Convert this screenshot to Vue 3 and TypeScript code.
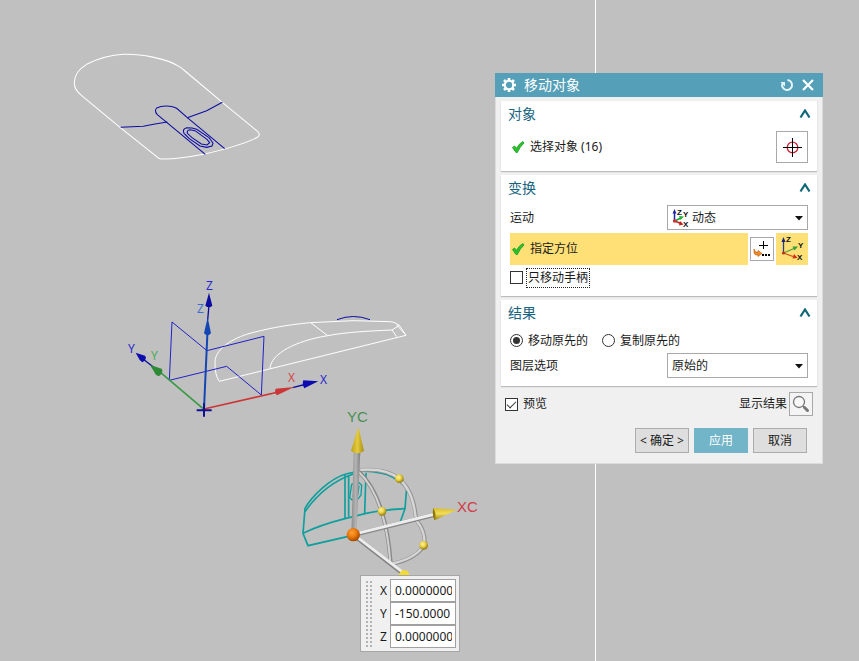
<script setup lang="ts">
import { reactive, ref } from 'vue'

interface Coordinate {
  axis: string
  value: string
}

const coordinates = reactive<Coordinate[]>([
  { axis: 'X', value: '0.000000000' },
  { axis: 'Y', value: '-150.0000' },
  { axis: 'Z', value: '0.000000000' },
])

const motion = ref('dynamic')
const layer = ref('original')
const handlesOnly = ref(false)
const resultMode = ref('move')
const preview = ref(true)
</script>

<template>
  <main class="viewport">
    <svg class="scene" width="859" height="661" aria-hidden="true">
      <defs>
        <linearGradient id="rod" x1="0" x2="1" y1="0" y2="0">
          <stop offset="0" stop-color="#8b8b8b" />
          <stop offset="0.5" stop-color="#b4b4b4" />
          <stop offset="1" stop-color="#808080" />
        </linearGradient>
        <linearGradient id="coneUp" x1="0" x2="1" y1="0" y2="0">
          <stop offset="0" stop-color="#bba11a" />
          <stop offset="0.5" stop-color="#e4ca3c" />
          <stop offset="1" stop-color="#a88e10" />
        </linearGradient>
        <linearGradient id="coneSide" x1="0" x2="0" y1="0" y2="1">
          <stop offset="0" stop-color="#d8bd2c" />
          <stop offset="0.45" stop-color="#f2dc58" />
          <stop offset="1" stop-color="#9a8210" />
        </linearGradient>
        <radialGradient id="ballOrange" cx="0.4" cy="0.35" r="0.65">
          <stop offset="0" stop-color="#ffa23c" />
          <stop offset="0.5" stop-color="#ee7a0a" />
          <stop offset="1" stop-color="#a04a00" />
        </radialGradient>
        <radialGradient id="ballYellow" cx="0.4" cy="0.35" r="0.65">
          <stop offset="0" stop-color="#fff3a0" />
          <stop offset="0.5" stop-color="#ecd040" />
          <stop offset="1" stop-color="#8f7a10" />
        </radialGradient>
      </defs>

      <!-- Cover part, tilted view -->
      <g transform="translate(60 40) scale(0.33333)" fill="none" stroke-width="3.2">
        <path
          stroke="#fff"
          d="M43 130 C42 105 60 85 80 73 C110 58 150 45 190 43 C240 41 320 55 358 80 Q368 86 375 93 L487 187 L590 272 Q605 284 592 292 C560 309 500 327 430 343 C390 351 340 358 305 357 Q298 358 290 350 L180 262 L65 167 Q43 150 43 130 Z"
        />
        <g stroke="#0c0ca4">
          <path d="M182 262 L250 259 L285 252 L322 246" />
          <path d="M382 233 L440 212 L487 187" />
          <path d="M436 343 L292 224 Q282 213 290 204 Q308 195 338 200 L350 205 L382 233 L494 326" />
          <path d="M372 280 Q366 267 380 263 L396 264 L410 268 L447 293 L459 309 L456 318 L440 322 L420 318 L388 296 Z" />
          <path d="M382 280 Q380 270 390 269 L405 272 L441 298 L449 308 L441 315 L424 312 L395 292 Z" />
        </g>
      </g>

      <!-- Cover part, side view -->
      <g transform="translate(260 300) scale(0.33333)" fill="none" stroke="#fff" stroke-width="3">
        <path d="M-122 244 L438 106 L418 76 L402 67 L390 65 L280 62 L152 68 C80 74 10 88 -40 103 C-90 119 -134 150 -135 185 Q-136 226 -122 244" />
        <path d="M30 206 C32 160 110 122 203 107 C260 96 330 93 396 90 L410 110" />
        <path d="M152 68 L203 107 M396 90 L418 76 M410 75 L436 103" />
        <path stroke="#0c0ca4" d="M231 59 Q280 40 330 59" />
      </g>

      <!-- Datum planes and axes -->
      <g transform="translate(120 270) scale(0.33333)" fill="none" stroke="#2020c8" stroke-width="3">
        <path d="M148 331 L156 156 L261 242 L432 199 L424 375 L320 289 Z" />
        <path stroke="#0c0c9c" stroke-width="4" d="M263 150 L267 105 M70 268 L105 295 M518 353 L560 342" />
        <path stroke="#3a9a44" stroke-width="5" d="M252 418 L115 302" />
        <path stroke="#cc3636" stroke-width="5" d="M252 417 L475 366" />
        <path stroke="#1446b4" stroke-width="6" d="M252 417 L262 195" />
        <path stroke="#101090" stroke-width="6" d="M230 421 H275 M252 400 V440" />
        <g stroke="none">
          <path fill="#0c0ca0" d="M267 68 L277 107 Q267 116 256 107 Z" />
          <path fill="#1446b4" d="M263 142 L273 190 Q263 203 252 190 Z" />
          <path fill="#0c0cb0" d="M47 248 L75 257 Q83 266 67 277 L59 270 Z" />
          <path fill="#2e8a36" d="M90 285 L125 296 Q132 306 117 319 L108 315 Z" />
          <path fill="#cc3636" d="M523 351 L471 376 Q462 368 467 356 Z" />
          <path fill="#0c0cb0" d="M595 334 L553 355 Q545 344 550 331 Z" />
        </g>
      </g>
      <g class="axis-label">
        <text x="206" y="290" fill="#2828cc">Z</text>
        <text x="197" y="313" fill="#3c6cd0">Z</text>
        <text x="128" y="353" fill="#2828cc">Y</text>
        <text x="151" y="360" fill="#4caa54">Y</text>
        <text x="288" y="382" fill="#d44848">X</text>
        <text x="320" y="384" fill="#2828cc">X</text>
      </g>

      <!-- Moved copy with the drag handles -->
      <g transform="translate(290 400) scale(0.33333)" fill="none" stroke="#0f9f9c" stroke-width="5">
        <path d="M188 406 L54 437 L39 400 L45 325 C65 290 120 235 168 222 Q220 206 270 219 Q310 224 350 264 L345 326 L330 368" />
        <path d="M39 400 Q90 375 165 356 L228 340 Q280 329 345 326" />
        <path d="M45 335 C80 285 125 244 190 222" />
        <path d="M165 222 V356 M176 226 V350 M228 218 L224 340" />
        <path stroke-width="4" d="M185 253 L179 292 L186 300 L205 296 L213 285 L215 256 L206 247 Z M194 257 L190 288 L203 284 L207 259 Z" />
      </g>
      <g transform="translate(290 400) scale(0.33333)" fill="none" stroke-linecap="round">
        <path stroke="#929292" stroke-width="12" d="M204 211 Q290 203 328 238 Q368 270 377 345 Q379 365 390 375 Q408 405 403 437 Q375 478 305 492" />
        <path stroke="#d6d6d6" stroke-width="7" d="M203 210 Q289 202 327 237 Q367 269 376 345 Q378 365 389 375 Q407 405 402 436 Q374 477 304 491" />
        <path stroke="#888" stroke-width="12" d="M205 214 Q250 255 275 334 Q296 400 302 490" />
        <path stroke="#d2d2d2" stroke-width="6" d="M204 214 Q249 255 274 334 Q295 400 301 490" />
        <path stroke="#858585" stroke-width="13" d="M190 405 L335 518 M190 405 L435 344" />
        <path stroke="#ededed" stroke-width="9" d="M191 403 L336 515 M190 403 L435 342" />
        <path fill="url(#rod)" d="M184 404 L191 155 H211 L199 404 Z" />
        <path fill="url(#coneUp)" d="M205 80 L222 153 Q203 166 183 153 Z" />
        <path fill="url(#coneSide)" d="M501 329 L434 361 Q425 344 430 324 Z" />
        <path fill="#8c7611" d="M434 361 Q425 344 430 324 Q441 343 434 361" />
        <path fill="#f2dc32" d="M326 523 L337 510 L352 512 L364 534 L330 536 Z" />
        <circle cx="190" cy="404" r="20" fill="url(#ballOrange)" />
        <circle cx="328" cy="236" r="13" fill="url(#ballYellow)" />
        <circle cx="276" cy="334" r="13" fill="url(#ballYellow)" />
        <circle cx="401" cy="436" r="13" fill="url(#ballYellow)" />
      </g>
      <g class="handle-label">
        <text x="347" y="422" fill="#4a9050">YC</text>
        <text x="457" y="512" fill="#d03c48">XC</text>
      </g>
    </svg>
    <div class="divider"></div>

    <form class="coords" @submit.prevent>
      <span class="grip"></span>
      <div class="coord-rows">
        <label v-for="item in coordinates" :key="item.axis" class="coord">
          <span>{{ item.axis }}</span>
          <input v-model="item.value" type="text" />
        </label>
      </div>
    </form>

    <section class="dialog" role="dialog" aria-labelledby="dialog-title">
      <header class="titlebar">
        <svg width="16" height="16" viewBox="0 0 16 16" fill="none" stroke="#fff">
          <circle cx="8" cy="8" r="4.3" stroke-width="2.2" />
          <path stroke-width="2.6" d="M8 1V3.2M8 12.8V15M1 8H3.2M12.8 8H15M3 3L4.6 4.6M11.4 11.4L13 13M3 13L4.6 11.4M11.4 4.6L13 3" />
        </svg>
        <h1 id="dialog-title">移动对象</h1>
        <button type="button" class="plain" aria-label="重置">
          <svg width="14" height="14" viewBox="0 0 14 14" fill="none" stroke="#e4f6fc">
            <path stroke-width="2" d="M7.5 2A5 5 0 1 1 2.3 5.5" />
            <path fill="#e4f6fc" stroke="none" d="M0.5 4H5V8.5Z" />
          </svg>
        </button>
        <button type="button" class="plain" aria-label="关闭">
          <svg width="14" height="14" viewBox="0 0 14 14" fill="none" stroke="#fff" stroke-width="2.2">
            <path d="M2 2L12 12M12 2L2 12" />
          </svg>
        </button>
      </header>

      <div class="body">
        <section class="group">
          <header class="group-head">
            <h2>对象</h2>
            <button type="button" class="plain" aria-label="折叠">
              <svg width="12" height="10" viewBox="0 0 12 10" fill="none" stroke="#0c6674" stroke-width="2.2"><path d="M1.5 8.5L6 1.5L10.5 8.5" /></svg>
            </button>
          </header>
          <div class="row select-row">
            <svg class="check" width="14" height="14" viewBox="0 0 14 14"><path fill="#2cc22c" stroke="#159a1c" stroke-width="0.8" d="M1.5 7.5L3.5 6L5.5 8.3Q8 3.5 12 1.5L13 3Q9 6.5 6.3 12.5H5Z" /></svg>
            <span class="grow">选择对象 (16)</span>
            <button type="button" class="pick" aria-label="点构造">
              <svg width="20" height="20" viewBox="0 0 20 20" fill="none">
                <circle cx="10.5" cy="10.5" r="5.3" stroke="#d02030" stroke-width="1.3" />
                <path stroke="#000" stroke-width="1" d="M10.5 1V20M1 10.5H20" />
              </svg>
            </button>
          </div>
        </section>

        <section class="group">
          <header class="group-head">
            <h2>变换</h2>
            <button type="button" class="plain" aria-label="折叠">
              <svg width="12" height="10" viewBox="0 0 12 10" fill="none" stroke="#0c6674" stroke-width="2.2"><path d="M1.5 8.5L6 1.5L10.5 8.5" /></svg>
            </button>
          </header>
          <div class="row motion-row">
            <label for="motion" class="grow">运动</label>
            <div class="combo with-icon">
              <svg class="combo-icon" width="18" height="18" viewBox="0 0 18 18" fill="none">
                <path stroke="#2020a8" stroke-width="1.5" d="M3.5 12V3" />
                <path fill="#2020a8" d="M3.5 0L5.5 4.5H1.5Z" />
                <path stroke="#20a038" stroke-width="1.5" d="M3.5 12L10 9" />
                <path fill="#20b038" d="M13 7.5L9.5 11L8 7Z" />
                <path stroke="#c02020" stroke-width="1.5" d="M3.5 12L10 14.5" />
                <path fill="#c02020" d="M12.5 15.5L8 16.5L9 12Z" />
                <circle cx="3.5" cy="12" r="1.7" fill="#d03030" />
                <g class="mini-label"><text x="6" y="6">Z</text><text x="12" y="8">Y</text><text x="12" y="18">X</text></g>
              </svg>
              <select id="motion" v-model="motion"><option value="dynamic">动态</option></select>
              <svg class="arrow" width="8" height="5" viewBox="0 0 8 5"><path fill="#111" d="M0 0H8L4 4.5Z" /></svg>
            </div>
          </div>
          <div class="row orient-row">
            <div class="active grow">
              <svg class="check" width="14" height="14" viewBox="0 0 14 14"><path fill="#2cc22c" stroke="#159a1c" stroke-width="0.8" d="M1.5 7.5L3.5 6L5.5 8.3Q8 3.5 12 1.5L13 3Q9 6.5 6.3 12.5H5Z" /></svg>
              <span>指定方位</span>
            </div>
            <button type="button" class="small-tool" aria-label="点对话框">
              <svg width="18" height="18" viewBox="0 0 18 18" fill="none">
                <path stroke="#000" stroke-width="1" d="M10.5 1V9M6 5.5H15" />
                <path fill="#f08a28" stroke="#b85c10" stroke-width="0.6" d="M1 9L2.5 12H5V10.5L9 13.5L5 16.5V15H2.5L1 13Z" />
                <path fill="#000" d="M9 14H11V16H9ZM12 14H14V16H12ZM15 14H17V16H15Z" />
              </svg>
            </button>
            <button type="button" class="csys" aria-label="操控器">
              <svg width="24" height="26" viewBox="0 0 24 26" fill="none">
                <path stroke="#2c3c80" stroke-width="1.3" d="M3.5 17V4" />
                <path fill="#18207c" d="M3.5 1L5.5 6H1.5Z" />
                <path stroke="#48a040" stroke-width="1.3" d="M3.5 17L14 12.5" />
                <path fill="#30a038" d="M18 10.5L14.5 14.5L12.5 10.5Z" />
                <path stroke="#d05020" stroke-width="1.3" d="M3.5 17L13 20.5" />
                <path fill="#d02c18" d="M17.5 22L12.5 22.5L14 18Z" />
                <circle cx="3.5" cy="17" r="1.6" fill="#c83018" />
                <g class="small-label"><text x="6" y="6">Z</text><text x="18" y="12">Y</text><text x="17" y="24">X</text></g>
              </svg>
            </button>
          </div>
          <label class="row tick-row">
            <input v-model="handlesOnly" type="checkbox" />
            <span class="focused">只移动手柄</span>
          </label>
        </section>

        <section class="group">
          <header class="group-head">
            <h2>结果</h2>
            <button type="button" class="plain" aria-label="折叠">
              <svg width="12" height="10" viewBox="0 0 12 10" fill="none" stroke="#0c6674" stroke-width="2.2"><path d="M1.5 8.5L6 1.5L10.5 8.5" /></svg>
            </button>
          </header>
          <div class="row radio-row">
            <label><input v-model="resultMode" type="radio" name="result" value="move" />移动原先的</label>
            <label><input v-model="resultMode" type="radio" name="result" value="copy" />复制原先的</label>
          </div>
          <div class="row">
            <label for="layer" class="grow">图层选项</label>
            <div class="combo">
              <select id="layer" v-model="layer"><option value="original">原始的</option></select>
              <svg class="arrow" width="8" height="5" viewBox="0 0 8 5"><path fill="#111" d="M0 0H8L4 4.5Z" /></svg>
            </div>
          </div>
        </section>

        <div class="preview-row">
          <label class="grow"><input v-model="preview" type="checkbox" />预览</label>
          <span>显示结果</span>
          <button type="button" class="lens" aria-label="显示结果">
            <svg width="18" height="18" viewBox="0 0 18 18" fill="none">
              <circle cx="7" cy="7" r="5.5" fill="#f8f8f8" stroke="#777" stroke-width="1.3" />
              <path stroke="#777" stroke-width="3" stroke-linecap="round" d="M12.5 12.5L15.5 15.5" />
              <path stroke="#777" stroke-width="1.2" d="M11 11L12.5 12.5" />
            </svg>
          </button>
        </div>

        <footer class="actions">
          <button type="button">&lt; 确定 &gt;</button>
          <button type="button" class="primary">应用</button>
          <button type="button">取消</button>
        </footer>
      </div>
    </section>
  </main>
</template>

<style>
body {
  background: #c0c0c0;
}
</style>

<style scoped>
.viewport {
  position: relative;
  min-height: 100vh;
  overflow: hidden;
  background: #c0c0c0;
  color: #1a1a1a;
  font: 12px/16px "Noto Sans", "Noto Sans CJK SC", sans-serif;
}

.viewport *,
.viewport *::before {
  box-sizing: border-box;
}

.scene {
  position: absolute;
  top: 0;
  left: 0;
}

.axis-label {
  font-size: 12px;
}

.handle-label {
  font: 15px "Liberation Sans", sans-serif;
}

.mini-label,
.small-label {
  font: bold 8px "Liberation Sans", sans-serif;
  fill: #111;
}

.divider {
  position: absolute;
  top: 0;
  bottom: 0;
  left: 595px;
  width: 1px;
  background: #fff;
}

svg {
  display: block;
  flex: none;
}

button,
input,
select {
  margin: 0;
  font: inherit;
  color: inherit;
}

button {
  display: flex;
  align-items: center;
  justify-content: center;
  padding: 0;
  border: 1px solid #a8a8a8;
  border-radius: 0;
  background: #fff;
}

.plain {
  border: 0;
  background: none;
}

.grow {
  flex: 1;
}

.coords {
  position: absolute;
  top: 575px;
  left: 360px;
  display: flex;
  width: 100px;
  padding: 3px;
  border: 1px solid #a6a6a6;
  background: #f0f0f0;
}

.grip {
  flex: none;
  width: 8px;
  background: conic-gradient(transparent 25%, #b4b4b4 0 50%, transparent 0) 0 0 / 4px 4px;
}

.coord-rows {
  flex: 1;
  min-width: 0;
}

.coord {
  display: flex;
  align-items: center;
}

.coord span {
  flex: none;
  width: 18px;
  padding-left: 8px;
}

.coord input {
  flex: 1;
  width: 0;
  min-width: 0;
  height: 23px;
  padding: 0 3px 0 4px;
  border: 1px solid #a0a0a0;
  border-radius: 0;
  background: #fff;
}

.dialog {
  position: absolute;
  top: 73px;
  left: 495px;
  width: 328px;
  border: 1px solid #dcdcdc;
  border-top: 0;
  background: #f0f0f0;
}

.titlebar {
  display: flex;
  align-items: center;
  gap: 7px;
  height: 24px;
  margin: 0 -1px;
  padding: 0 8px 0 6px;
  background: #559fb8;
  color: #fff;
}

h1,
h2 {
  flex: 1;
  margin: 0;
  font-size: 14px;
  font-weight: 400;
  line-height: 20px;
}

.body {
  display: flex;
  flex-direction: column;
  gap: 4px;
  padding: 4px 5px 10px;
}

.group {
  padding: 0 9px 8px;
  background: #fff;
  box-shadow: 0 1px 1px #bcbcbc;
}

.group-head {
  display: flex;
  align-items: center;
  height: 26px;
  margin: 0 -3px 0 -2px;
}

h2 {
  color: #17647f;
}

.row {
  display: flex;
  align-items: center;
}

.select-row {
  gap: 5px;
  margin-top: 4px;
  padding-left: 1px;
}

.pick {
  width: 32px;
  height: 32px;
}

.motion-row {
  margin-top: 4px;
}

.combo {
  position: relative;
  width: 141px;
}

.combo select {
  display: block;
  width: 100%;
  height: 25px;
  padding: 0 20px 0 4px;
  border: 1px solid #a8a8a8;
  border-radius: 0;
  background: #fff;
  appearance: none;
}

.with-icon select {
  padding-left: 24px;
}

.combo-icon {
  position: absolute;
  top: 4px;
  left: 4px;
  overflow: visible;
  pointer-events: none;
}

.arrow {
  position: absolute;
  top: 11px;
  right: 5px;
  pointer-events: none;
}

.orient-row {
  gap: 2px;
  margin-top: 3px;
}

.active {
  display: flex;
  align-items: center;
  gap: 5px;
  height: 32px;
  padding-left: 1px;
  background: #ffe077;
}

.small-tool {
  width: 24px;
  height: 24px;
}

.csys {
  width: 32px;
  height: 32px;
  border: 0;
  background: #ffe077;
}

input[type="checkbox"],
input[type="radio"] {
  display: grid;
  flex: none;
  place-items: center;
  width: 13px;
  height: 13px;
  border: 1px solid #333;
  background: #fff;
  appearance: none;
}

input[type="radio"] {
  border-radius: 50%;
}

input[type="radio"]:checked::before {
  width: 7px;
  height: 7px;
  border-radius: 50%;
  background: #333;
  content: "";
}

input[type="checkbox"]:checked::before {
  width: 9px;
  height: 5px;
  border: solid #333;
  border-width: 0 0 1px 1px;
  transform: translateY(-1px) rotate(-45deg);
  content: "";
}

.tick-row {
  gap: 3px;
  height: 23px;
  padding-top: 2px;
}

.focused {
  padding: 1px;
  border: 1px dotted #222;
}

.radio-row {
  gap: 14px;
  height: 27px;
  padding-top: 2px;
}

.radio-row label,
.preview-row label {
  display: flex;
  align-items: center;
  gap: 5px;
}

.preview-row {
  display: flex;
  align-items: center;
  gap: 2px;
  margin-top: 2px;
  padding: 0 4px;
}

.lens {
  width: 24px;
  height: 24px;
  background: #f4f4f4;
}

.actions {
  display: flex;
  justify-content: flex-end;
  gap: 5px;
  margin-top: 8px;
  padding-right: 10px;
}

.actions button {
  width: 54px;
  height: 25px;
  border-color: #acacac;
  background: #dedede;
}

.actions .primary {
  border-color: #72b4c8;
  background: #72b4c8;
  color: #fff;
}
</style>
